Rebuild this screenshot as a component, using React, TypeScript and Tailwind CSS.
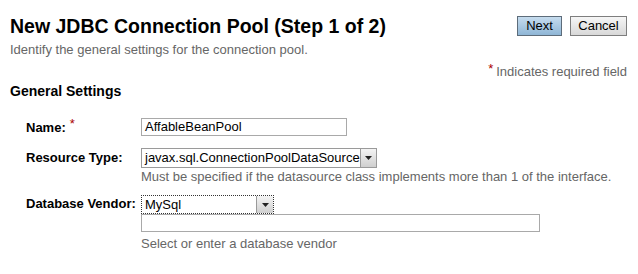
import React from "react";

function Arrow() {
  return (
    <span className="flex h-full w-[17px] items-center justify-center border-l border-[#9a9a9a] bg-gradient-to-b from-[#f4f4f4] to-[#cfcfcf]">
      <svg width="7" height="4" viewBox="0 0 7 4">
        <path d="M0 0h7L3.5 4z" fill="#222" />
      </svg>
    </span>
  );
}

export default function App() {
  return (
    <main className="h-[274px] w-[638px] bg-white pl-[10px] pr-[11px] font-['Liberation_Sans',Arial,sans-serif]">
      <div className="flex items-start justify-between pt-[14px]">
        <h1 className="text-[19.5px] font-bold leading-[24px] text-black">
          New JDBC Connection Pool (Step 1 of 2)
        </h1>
        <div className="mt-[2px] flex gap-[8px]">
          <button className="h-[20px] w-[45px] border border-[#5d6c7a] bg-gradient-to-b from-[#c6dcee] to-[#8fb6d6] text-[13px] leading-[18px] text-black">
            Next
          </button>
          <button className="h-[20px] w-[57px] border border-[#7e7e7e] bg-gradient-to-b from-[#f6f6f6] to-[#d8d8d8] text-[13px] leading-[18px] text-black">
            Cancel
          </button>
        </div>
      </div>

      <p className="mt-[4px] text-[13px] leading-[16px] text-[#666]">
        Identify the general settings for the connection pool.
      </p>

      <p className="mt-[6px] text-right text-[13px] leading-[16px] text-[#666]">
        <span className="relative -top-[3px] mr-[3px] text-[13px] text-[#a00]">*</span>
        Indicates required field
      </p>

      <h2 className="mt-[3px] text-[14px] font-bold leading-[16px] text-black">
        General Settings
      </h2>

      <div className="mt-[19px] grid grid-cols-[115px_1fr] pl-[16px] text-[13px] leading-[16px]">
        <div className="pt-[2px] font-bold text-black">
          Name:
          <span className="relative -top-[4px] ml-[4px] text-[13px] font-normal text-[#a00]">*</span>
        </div>
        <div>
          <div className="flex h-[18px] w-[206px] items-center border border-[#a9a9a9] px-[3px] text-[13px] text-black">
            AffableBeanPool
          </div>
        </div>

        <div className="mt-[12px] pt-[2px] font-bold text-black">Resource Type:</div>
        <div className="mt-[12px]">
          <div className="flex h-[20px] w-[236px] items-center border border-[#9a9a9a] bg-white text-[13px] text-black">
            <span className="flex-1 pl-[3px]">javax.sql.ConnectionPoolDataSource</span>
            <Arrow />
          </div>
          <p className="mt-[1px] text-[13px] leading-[15px] text-[#666]">
            Must be specified if the datasource class implements more than 1 of the interface.
          </p>
        </div>

        <div className="mt-[11px] pt-[1px] font-bold text-black">Database Vendor:</div>
        <div className="mt-[11px]">
          <div className="flex h-[19px] w-[133px] items-center border border-dotted border-[#333] bg-white text-[13px] text-black">
            <span className="flex-1 pl-[3px]">MySql</span>
            <Arrow />
          </div>
          <div className="h-[18px] w-[399px] border border-[#a9a9a9]"></div>
          <p className="mt-[4px] text-[13px] leading-[15px] text-[#666]">
            Select or enter a database vendor
          </p>
        </div>
      </div>
    </main>
  );
}
